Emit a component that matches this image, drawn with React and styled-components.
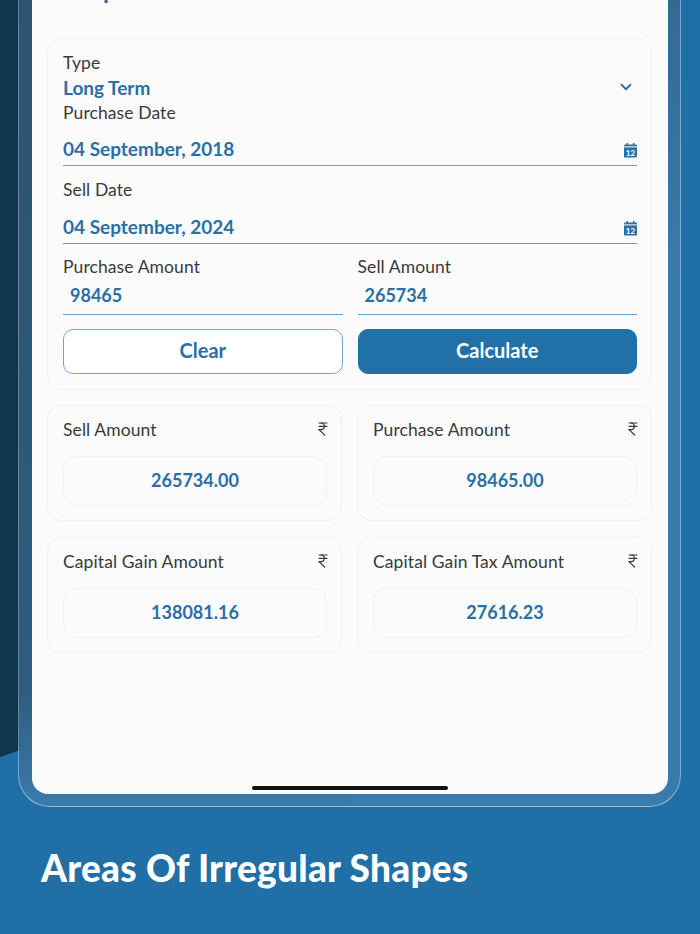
import styled, { createGlobalStyle } from "styled-components";
import { ChevronDown, ChevronLeft, IndianRupee } from "lucide-react";

const GlobalStyle = createGlobalStyle`
  html, body {
    margin: 0;
    padding: 0;
  }
  body {
    font-family: "Lato", "Open Sans", sans-serif;
  }
`;

const Page = styled.div`
  position: relative;
  width: 700px;
  height: 934px;
  overflow: hidden;
  background: #206fa7;
`;

// dark wedge behind the tablet
const Wedge = styled.div`
  position: absolute;
  left: 0;
  top: 0;
  width: 340px;
  height: 757px;
  background: #10354f;
  clip-path: polygon(0 0, 100% 0, 100% 84.5%, 0 100%);
`;

const Frame = styled.div`
  position: relative;
  box-sizing: border-box;
  width: 663px;
  height: 807px;
  margin-left: 18px;
  padding: 0 12px 12px 13px;
  border: 1px solid rgba(255, 255, 255, 0.4);
  border-bottom-color: rgba(255, 255, 255, 0.55);
  border-top: 0;
  border-radius: 0 0 32px 32px;
  background:
    linear-gradient(180deg, #2c5370 0%, #2f5b7c 85%, #3a7bae 100%) left / 50% 100% no-repeat,
    linear-gradient(180deg, #336a92 0%, #3a7bae 35%, #3a7bae 100%) right / 50% 100% no-repeat;
`;

const Screen = styled.div`
  box-sizing: border-box;
  display: flex;
  flex-direction: column;
  height: 100%;
  padding: 0 16px 4px 15px;
  background: #fbfbfc;
  border-radius: 0 0 16px 16px;
  overflow: hidden;
`;

const TitleRow = styled.div`
  display: flex;
  align-items: center;
  gap: 8px;
  height: 34px;
  margin: -28px 0 32px;
  color: #206fa7;
  font-size: 24px;
  font-weight: 700;
  svg {
    color: #444;
    flex: none;
  }
`;

const Card = styled.div`
  box-sizing: border-box;
  background: #fbfbfc;
  border: 1px solid #f1f1f3;
  border-radius: 14px;
`;

const FormCard = styled(Card)`
  padding: 11px 14px 15px 15px;
`;

const Label = styled.div`
  height: 24px;
  color: #3a3a3a;
  font-size: 17.5px;
  line-height: 26px;
  letter-spacing: 0.1px;
`;

const TypeRow = styled.div`
  display: flex;
  align-items: center;
  justify-content: space-between;
  height: 26px;
  color: #2a6fa5;
  font-size: 19px;
  font-weight: 700;
  svg {
    margin-right: 2px;
  }
`;

const ValueRow = styled.div`
  box-sizing: border-box;
  display: flex;
  align-items: center;
  justify-content: space-between;
  height: ${(p) => p.$h}px;
  padding: ${(p) => p.$pad};
  border-bottom: 1.5px solid #6d9dc1;
  color: #2a6fa5;
  font-size: ${(p) => p.$size || 19}px;
  font-weight: 700;
  svg {
    margin-top: 4px;
  }
`;

const Field = styled.div`
  margin-top: ${(p) => p.$top || 0}px;
`;

const TwoCols = styled.div`
  display: grid;
  grid-template-columns: 1fr 1fr;
  column-gap: 15px;
  margin-top: ${(p) => p.$top || 0}px;
`;

const Button = styled.button`
  height: 45px;
  padding: 0 0 3px;
  border-radius: 10px;
  border: 1px solid ${(p) => (p.$primary ? "#2170a8" : "#7ea6c4")};
  background: ${(p) => (p.$primary ? "#2170a8" : "#fff")};
  color: ${(p) => (p.$primary ? "#fff" : "#2a6fa5")};
  font-family: inherit;
  font-size: 20px;
  font-weight: 700;
`;

const Results = styled.div`
  display: grid;
  grid-template-columns: 1fr 1fr;
  gap: 16px 15px;
  margin-top: 15px;
`;

const ResultCard = styled(Card)`
  height: 116px;
  padding: 11px 14px 14px 15px;
`;

const ResultHead = styled.div`
  display: flex;
  align-items: center;
  justify-content: space-between;
  height: 24px;
  margin-bottom: 15px;
  color: #3a3a3a;
  font-size: 17.5px;
  letter-spacing: 0.1px;
  svg {
    margin-right: -4px;
    margin-top: -1px;
  }
`;

const ResultValue = styled.div`
  display: flex;
  align-items: center;
  justify-content: center;
  height: 50px;
  padding-bottom: 2px;
  box-sizing: border-box;
  border: 1px solid #f1f1f3;
  border-radius: 14px;
  color: #2a6fa5;
  font-size: 18px;
  font-weight: 700;
`;

const HomeBar = styled.div`
  flex: none;
  align-self: center;
  width: 196px;
  height: 4px;
  margin-top: auto;
  border-radius: 2px;
  background: #111;
`;

const Caption = styled.div`
  padding: 39px 0 0 41px;
  color: #fff;
  font-size: 37px;
  line-height: 44px;
  letter-spacing: 0.25px;
  font-weight: 900;
`;

function CalendarIcon() {
  return (
    <svg width="14" height="15" viewBox="0 0 14 15">
      <rect x="1" y="1.5" width="13" height="13" rx="1" fill="#2a6fa5" />
      <rect x="3.5" y="0" width="1.6" height="3" fill="#2a6fa5" />
      <rect x="9.9" y="0" width="1.6" height="3" fill="#2a6fa5" />
      <rect x="1" y="3.4" width="13" height="1" fill="#fff" />
      <text x="7.5" y="12.8" textAnchor="middle" fontSize="8" fontWeight="700" fill="#fff" fontFamily="Lato">
        12
      </text>
    </svg>
  );
}

const results = [
  { label: "Sell Amount", value: "265734.00" },
  { label: "Purchase Amount", value: "98465.00" },
  { label: "Capital Gain Amount", value: "138081.16" },
  { label: "Capital Gain Tax Amount", value: "27616.23" },
];

export default function App() {
  return (
    <>
      <GlobalStyle />
      <Page>
        <Wedge />
        <Frame>
          <Screen>
            <TitleRow>
              <ChevronLeft size={20} />
              <span>Capital Gain</span>
            </TitleRow>

            <FormCard>
              <Label>Type</Label>
              <TypeRow>
                Long Term
                <ChevronDown size={18} strokeWidth={2.4} />
              </TypeRow>
              <Label>Purchase Date</Label>
              <ValueRow $h={42} $pad="8px 0 0">
                04 September, 2018
                <CalendarIcon />
              </ValueRow>
              <Field $top={11}>
                <Label>Sell Date</Label>
                <ValueRow $h={43} $pad="9px 0 0">
                  04 September, 2024
                  <CalendarIcon />
                </ValueRow>
              </Field>
              <TwoCols $top={10}>
                <Field>
                  <Label>Purchase Amount</Label>
                  <ValueRow $h={37} $size={18} $pad="0 7px 3px">98465</ValueRow>
                </Field>
                <Field>
                  <Label>Sell Amount</Label>
                  <ValueRow $h={37} $size={18} $pad="0 7px 3px">265734</ValueRow>
                </Field>
              </TwoCols>
              <TwoCols $top={14}>
                <Button>Clear</Button>
                <Button $primary>Calculate</Button>
              </TwoCols>
            </FormCard>

            <Results>
              {results.map((r) => (
                <ResultCard key={r.label}>
                  <ResultHead>
                    {r.label}
                    <IndianRupee size={16} strokeWidth={1.8} />
                  </ResultHead>
                  <ResultValue>{r.value}</ResultValue>
                </ResultCard>
              ))}
            </Results>

            <HomeBar />
          </Screen>
        </Frame>
        <Caption>Areas Of Irregular Shapes</Caption>
      </Page>
    </>
  );
}
